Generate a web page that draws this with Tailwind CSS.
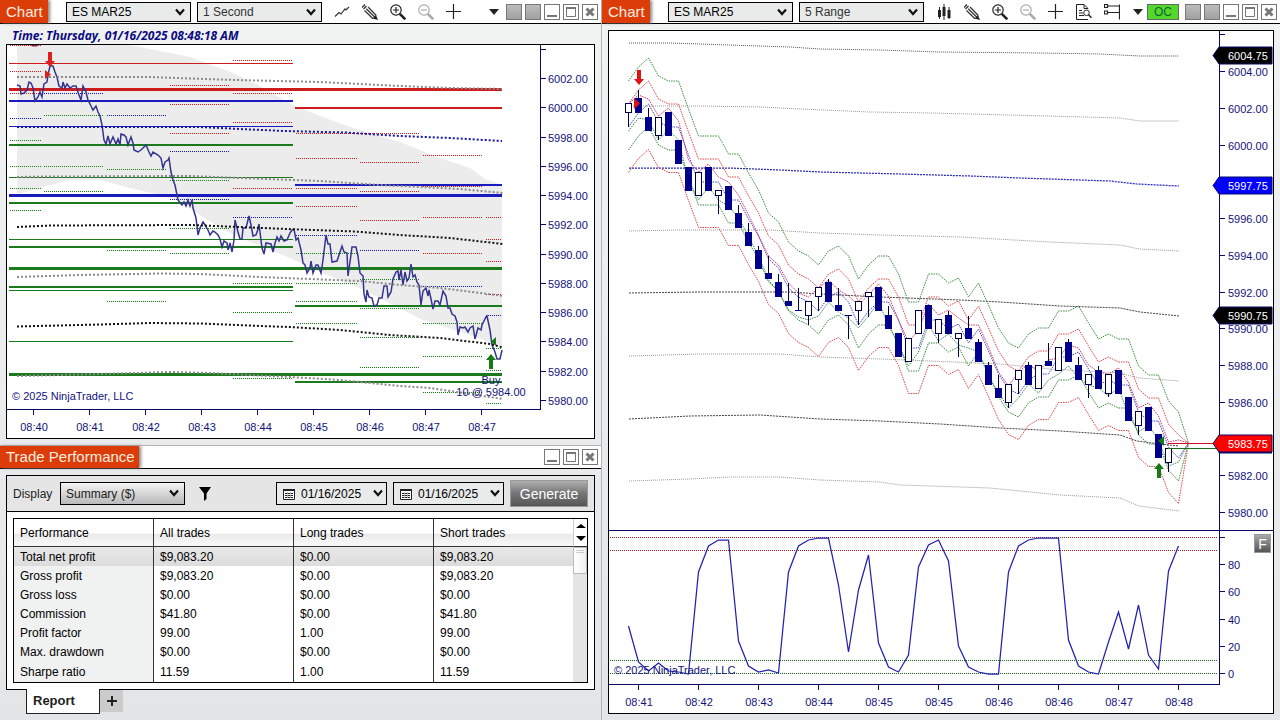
<!DOCTYPE html>
<html lang="en">
<head>
    <meta charset="UTF-8">
    <meta name="viewport" content="width=device-width, initial-scale=1.0">
    <title>ES MAR25 - Charts and Trade Performance</title>
    <script src="https://cdn.jsdelivr.net/npm/@tailwindcss/browser@4"></script>
</head>
<body class="min-h-screen bg-linear-to-b from-[#f1f3f3] to-[#e4e5e7] font-['Liberation_Sans',Arial,sans-serif] text-xs text-black">

    <!-- Shared icons -->
    <svg class="hidden">
        <symbol id="i-line" viewBox="0 0 16 16"><path d="M1 12.5l4-4 2 1.500 4-5 1 1 3-3" fill="none" stroke="#333" stroke-width="1.2"/></symbol>
        <symbol id="i-bars" viewBox="0 0 16 16"><path d="M3.5 3v12M8 0v16M13 3v12" stroke="#222"/><path d="M2 6h3v7H2zM6.5 3h3v9h-3zM11.500 6h3v8h-3z" fill="#222"/></symbol>
        <symbol id="i-pencil" viewBox="0 0 16 16"><path d="M0 3.500l3-3M1.500 5l3-3" stroke="#333" stroke-width="1.300"/><path d="M2.500 6.500L11 14.800M4.200 4.800L12.700 13M6 3L14.300 11.500" stroke="#333" stroke-width="1.200"/><path d="M10.500 14.500l3.500-3.500L16 16z" fill="#222"/></symbol>
        <symbol id="i-zoomin" viewBox="0 0 16 16"><circle cx="6" cy="6" r="5.200" fill="#fff" stroke="#222" stroke-width="1.200"/><path d="M3 6h6M6 3v6" stroke="#222" stroke-width="1.200"/><path d="M9.800 9.800l5.500 5.500" stroke="#222" stroke-width="2.600"/></symbol>
        <symbol id="i-zoomout" viewBox="0 0 16 16"><circle cx="6" cy="6" r="5.200" fill="#fff" stroke="#aaa" stroke-width="1.200"/><path d="M3 6h6" stroke="#aaa" stroke-width="1.200"/><path d="M9.800 9.800l5.500 5.500" stroke="#aaa" stroke-width="2.600"/></symbol>
        <symbol id="i-cross" viewBox="0 0 16 16"><path d="M0 7.500h15M7.500 0v15" stroke="#222" stroke-width="1.200"/></symbol>
        <symbol id="i-doc" viewBox="0 0 16 16"><path d="M12 15.500H.5V.5h7.500l4 4M8 .5v4h4M3 6.500h3M3 9h4M3 11.500h5" fill="none" stroke="#222"/><circle cx="10.500" cy="8.800" r="2.800" fill="#fff" stroke="#222"/><path d="M12.500 10.800l3 3" stroke="#222" stroke-width="1.500"/></symbol>
        <symbol id="i-tree" viewBox="0 0 16 16"><path d="M.5.500h3v3h-3zM.5 7h3v3h-3zM4 2h11M4 8.500h11M15.500.5v15" fill="none" stroke="#222" stroke-width="1.200"/></symbol>
        <symbol id="i-caret" viewBox="0 0 10 6"><path d="M0 0h10L5 6z" fill="#222"/></symbol>
        <symbol id="i-chev" viewBox="0 0 10 8"><path d="M1 1.500l4 4.500 4-4.500" fill="none" stroke="#111" stroke-width="2.200"/></symbol>
        <symbol id="i-min" viewBox="0 0 14 14"><path d="M2 11h10" stroke="#777" stroke-width="2"/></symbol>
        <symbol id="i-max" viewBox="0 0 14 14"><path d="M2.500 3.500h9v8h-9z" fill="none" stroke="#777"/><path d="M2 3h10" stroke="#777" stroke-width="2"/></symbol>
        <symbol id="i-close" viewBox="0 0 14 14"><path d="M3.500 3.500l7 7M10.500 3.500l-7 7" stroke="#777" stroke-width="3"/></symbol>
        <symbol id="i-cal" viewBox="0 0 12 12"><path d="M.5 1.500h11v10H.5z" fill="#fff" stroke="#222"/><path d="M0 1h12v2H0z" fill="#222"/><path d="M2 5.500h8M2 7.500h8M2 9.500h8" stroke="#222"/><path d="M4.500 4v6M7.500 4v6" stroke="#bbb" stroke-width=".8"/></symbol>
    </svg>

    <div class="grid min-h-screen grid-cols-[602fr_678fr]">

        <!-- Left column -->
        <div class="flex min-w-0 flex-col border-r border-[#b4b4b4]">
            <header class="flex h-6 items-center border-b border-black bg-white pr-[3px]">
                <h2 class="h-full w-12 shrink-0 bg-[#dc3d08] pl-1.5 text-[15px] leading-6 text-[#fdeee0] shadow-[2px_0_3px_#888]">Chart</h2>
                <label class="relative ml-[18px] flex">
                    <select aria-label="Instrument" class="h-5 w-[125px] appearance-none border border-black bg-[#e9eaea] pl-[5px]"><option>ES MAR25</option></select>
                    <svg class="pointer-events-none absolute top-1.5 right-1.5 h-2 w-2.5"><use href="#i-chev"/></svg>
                </label>
                <label class="relative ml-1.5 flex">
                    <select aria-label="Interval" class="h-5 w-[125px] appearance-none border border-black bg-[#e9eaea] pl-[5px] text-[#333]"><option>1 Second</option></select>
                    <svg class="pointer-events-none absolute top-1.5 right-1.5 h-2 w-2.5"><use href="#i-chev"/></svg>
                </label>
                <div class="ml-3 flex gap-3">
                    <button aria-label="Chart style"><svg class="size-4"><use href="#i-line"/></svg></button>
                    <button aria-label="Drawing tools"><svg class="size-4"><use href="#i-pencil"/></svg></button>
                    <button aria-label="Zoom in"><svg class="size-4"><use href="#i-zoomin"/></svg></button>
                    <button aria-label="Zoom out"><svg class="size-4"><use href="#i-zoomout"/></svg></button>
                    <button aria-label="Crosshair"><svg class="size-4"><use href="#i-cross"/></svg></button>
                </div>
                <button aria-label="More" class="ml-auto"><svg class="h-1.5 w-2.5"><use href="#i-caret"/></svg></button>
                <div class="ml-[7px] flex gap-[3px]">
                    <button aria-label="Instrument link" class="size-4 border border-[#777] bg-linear-to-b from-[#bdbdbd] to-[#a0a0a0]"></button>
                    <button aria-label="Interval link" class="size-4 border border-[#777] bg-linear-to-b from-[#bdbdbd] to-[#a0a0a0]"></button>
                    <button aria-label="Minimize" class="size-4 border border-[#777] bg-white"><svg class="size-3.5"><use href="#i-min"/></svg></button>
                    <button aria-label="Maximize" class="size-4 border border-[#777] bg-white"><svg class="size-3.5"><use href="#i-max"/></svg></button>
                    <button aria-label="Close" class="size-4 border border-[#777] bg-white"><svg class="size-3.5"><use href="#i-close"/></svg></button>
                </div>
            </header>

            <p class="h-5 pt-0.5 pl-3 font-['Open_Sans','Noto_Sans',sans-serif] text-xs leading-5 font-bold text-[#0a0a80] italic">Time: Thursday, 01/16/2025 08:48:18 AM</p>

            <div class="mx-1.5 border border-black bg-white">
                <svg id="secondChart" class="block h-auto w-full text-[11px]" viewBox="7 45 587 393"></svg>
            </div>

            <!-- Trade performance window -->
            <header class="mt-1.5 flex h-6 items-center border-t border-b border-t-[#b4b4b4] border-b-black bg-white pr-[3px]">
                <h2 class="h-full bg-[#dc3d08] pr-1 pl-1.5 text-[15px] leading-[22px] text-[#fdeee0] shadow-[2px_0_3px_#888]">Trade Performance</h2>
                <div class="ml-auto flex gap-[3px]">
                    <button aria-label="Minimize" class="size-4 border border-[#777] bg-white"><svg class="size-3.5"><use href="#i-min"/></svg></button>
                    <button aria-label="Maximize" class="size-4 border border-[#777] bg-white"><svg class="size-3.5"><use href="#i-max"/></svg></button>
                    <button aria-label="Close" class="size-4 border border-[#777] bg-white"><svg class="size-3.5"><use href="#i-close"/></svg></button>
                </div>
            </header>

            <section class="mx-1.5 mt-1.5 border border-black bg-white">
                <div class="flex h-9 items-center border-b border-black bg-[#e5e5e5] px-1.5">
                    <label for="display" class="w-[47px] text-[#222]">Display</label>
                    <div class="relative flex">
                        <select id="display" class="h-[23px] w-[125px] appearance-none border border-black bg-linear-to-b from-[#f4f4f4] to-[#b9b9b9] pl-[5px] text-[#222]"><option>Summary ($)</option></select>
                        <svg class="pointer-events-none absolute top-[7px] right-1.5 h-2 w-2.5"><use href="#i-chev"/></svg>
                    </div>
                    <button aria-label="Filter" class="ml-3.5"><svg class="h-3.5 w-3" viewBox="0 0 12 14"><path d="M0 0h12L7.500 6.500V12L5 14V6.500z"/></svg></button>
                    <div class="relative ml-auto flex">
                        <select aria-label="Start date" class="h-[23px] w-[111px] appearance-none border border-black bg-[#e9eaea] pl-6"><option>01/16/2025</option></select>
                        <svg class="pointer-events-none absolute top-1.5 left-[7px] size-3"><use href="#i-cal"/></svg>
                        <svg class="pointer-events-none absolute top-[7px] right-1 h-2 w-2.5"><use href="#i-chev"/></svg>
                    </div>
                    <div class="relative ml-1.5 flex">
                        <select aria-label="End date" class="h-[23px] w-[111px] appearance-none border border-black bg-[#e9eaea] pl-6"><option>01/16/2025</option></select>
                        <svg class="pointer-events-none absolute top-1.5 left-[7px] size-3"><use href="#i-cal"/></svg>
                        <svg class="pointer-events-none absolute top-[7px] right-1 h-2 w-2.5"><use href="#i-chev"/></svg>
                    </div>
                    <button class="ml-1.5 h-[27px] w-[78px] border border-[#999] bg-linear-to-b from-[#b0b0b0] via-[#757575] to-[#575757] text-sm leading-6 text-white">Generate</button>
                </div>

                <div class="m-1.5 flex border border-black">
                    <table class="flex-1 border-separate border-spacing-0 text-left">
                        <thead>
                            <tr class="h-7 bg-linear-to-b from-white from-50% via-[#eaeaea] via-55% to-[#fafafa]">
                                <th class="w-[140px] border-r border-b border-[#333] pl-1.5 font-normal">Performance</th>
                                <th class="w-[140px] border-r border-b border-[#333] pl-1.5 font-normal">All trades</th>
                                <th class="w-[140px] border-r border-b border-[#333] pl-1.5 font-normal">Long trades</th>
                                <th class="border-b border-[#333] pl-1.5 font-normal">Short trades</th>
                            </tr>
                        </thead>
                        <tbody id="performanceRows"></tbody>
                    </table>
                    <div class="flex w-3.5 flex-col bg-[#e4e4e4]">
                        <div class="flex h-7 flex-col items-center justify-between border-b border-l border-b-[#333] border-l-[#ccc] bg-white py-[5px]">
                            <svg class="h-1 w-2.5" viewBox="0 0 10 4"><path d="M0 4l5-4 5 4z"/></svg>
                            <svg class="h-[5px] w-2.5" viewBox="0 0 10 5"><path d="M0 0l5 5 5-5z"/></svg>
                        </div>
                        <div class="h-[27px] border border-[#bbb] bg-linear-to-r from-white to-[#f0f0f0] px-0.5 pt-0.5">
                            <div class="h-[3px] border-y border-[#ccc]"></div>
                        </div>
                    </div>
                </div>
            </section>

            <div class="flex pl-[26px]">
                <a href="#report" class="z-10 -mt-px h-[25px] w-[74px] border-x border-b border-[#222] bg-white pl-1.5 text-[13px] leading-6 font-bold text-[#222]">Report</a>
                <button aria-label="Add tab" class="flex h-[22px] w-[23px] items-center justify-center bg-[#cbcbcb]"><svg class="size-2.5" viewBox="0 0 10 10"><path d="M0 5h10M5 0v10" stroke="#222" stroke-width="2"/></svg></button>
            </div>
        </div>

        <!-- Right column -->
        <div class="min-w-0">
            <header class="flex h-6 items-center border-b border-black bg-white pr-[3px]">
                <h2 class="h-full w-12 shrink-0 bg-[#dc3d08] pl-1.5 text-[15px] leading-6 text-[#fdeee0] shadow-[2px_0_3px_#888]">Chart</h2>
                <label class="relative ml-[18px] flex">
                    <select aria-label="Instrument" class="h-5 w-[125px] appearance-none border border-black bg-[#e9eaea] pl-[5px]"><option>ES MAR25</option></select>
                    <svg class="pointer-events-none absolute top-1.5 right-1.5 h-2 w-2.5"><use href="#i-chev"/></svg>
                </label>
                <label class="relative ml-1.5 flex">
                    <select aria-label="Interval" class="h-5 w-[125px] appearance-none border border-black bg-[#e9eaea] pl-[5px] text-[#333]"><option>5 Range</option></select>
                    <svg class="pointer-events-none absolute top-1.5 right-1.5 h-2 w-2.5"><use href="#i-chev"/></svg>
                </label>
                <div class="ml-3 flex gap-3">
                    <button aria-label="Chart style"><svg class="size-4"><use href="#i-bars"/></svg></button>
                    <button aria-label="Drawing tools"><svg class="size-4"><use href="#i-pencil"/></svg></button>
                    <button aria-label="Zoom in"><svg class="size-4"><use href="#i-zoomin"/></svg></button>
                    <button aria-label="Zoom out"><svg class="size-4"><use href="#i-zoomout"/></svg></button>
                    <button aria-label="Crosshair"><svg class="size-4"><use href="#i-cross"/></svg></button>
                    <button aria-label="Data box"><svg class="size-4"><use href="#i-doc"/></svg></button>
                    <button aria-label="Chart trader"><svg class="size-4"><use href="#i-tree"/></svg></button>
                </div>
                <button aria-label="More" class="ml-auto"><svg class="h-1.5 w-2.5"><use href="#i-caret"/></svg></button>
                <button class="ml-1 h-4 w-8 border border-[#666] bg-[#54d82c] text-xs leading-[14px] text-[#163]">OC</button>
                <div class="ml-1.5 flex gap-[3px]">
                    <button aria-label="Instrument link" class="size-4 border border-[#777] bg-linear-to-b from-[#bdbdbd] to-[#a0a0a0]"></button>
                    <button aria-label="Interval link" class="size-4 border border-[#777] bg-linear-to-b from-[#bdbdbd] to-[#a0a0a0]"></button>
                    <button aria-label="Minimize" class="size-4 border border-[#777] bg-white"><svg class="size-3.5"><use href="#i-min"/></svg></button>
                    <button aria-label="Maximize" class="size-4 border border-[#777] bg-white"><svg class="size-3.5"><use href="#i-max"/></svg></button>
                    <button aria-label="Close" class="size-4 border border-[#777] bg-white"><svg class="size-3.5"><use href="#i-close"/></svg></button>
                </div>
            </header>
            <div class="relative mx-1.5 mt-1.5 border border-black bg-white">
                <svg id="rangeChart" class="block h-auto w-full text-[11px]" viewBox="609 31 664 682"></svg>
                <button class="absolute top-[503px] right-[2px] h-[19px] w-[17px] border border-[#999] bg-linear-to-b from-[#a8a8a8] to-[#555] text-sm leading-4 text-white">F</button>
            </div>
        </div>
    </div>

    <script>
        const NAVY = '#0a0a66', TEXT = '#12127a';
        const RED = '#cc1c1c', BLUE = '#1a1abf', GREEN = '#1b7a1b';

        function line(x1, y1, x2, y2, color, width = 1, dash = '') {
            return `<line x1="${x1}" y1="${y1}" x2="${x2}" y2="${y2}" stroke="${color}" stroke-width="${width}" stroke-dasharray="${dash}" shape-rendering="crispEdges"/>`;
        }
        function poly(points, color, width = 1, dash = '') {
            return `<polyline points="${points}" fill="none" stroke="${color}" stroke-width="${width}" stroke-dasharray="${dash}"/>`;
        }
        function label(x, y, text, color = TEXT, anchor = 'start') {
            return `<text x="${x}" y="${y}" fill="${color}" text-anchor="${anchor}">${text}</text>`;
        }

        // ---------- performance table ----------
        const rows = [
            ['Total net profit', '$9,083.20', '$0.00', '$9,083.20'],
            ['Gross profit', '$9,083.20', '$0.00', '$9,083.20'],
            ['Gross loss', '$0.00', '$0.00', '$0.00'],
            ['Commission', '$41.80', '$0.00', '$41.80'],
            ['Profit factor', '99.00', '1.00', '99.00'],
            ['Max. drawdown', '$0.00', '$0.00', '$0.00'],
            ['Sharpe ratio', '11.59', '1.00', '11.59']
        ];
        document.getElementById('performanceRows').innerHTML = rows.map((r, i) => `
            <tr class="${i === 0 ? 'h-[19px] bg-linear-to-b from-[#e9e9e9] to-[#dcdcdc]' : i === rows.length - 1 ? 'h-[21px]' : 'h-[19px]'}">
                <td class="${i === 0 ? 'border-r border-[#333] pl-1.5' : 'border-r border-[#333] bg-[#f0f2f2] pl-1.5'}">${r[0]}</td>
                <td class="border-r border-[#333] pl-1.5">${r[1]}</td>
                <td class="border-r border-[#333] pl-1.5">${r[2]}</td>
                <td class="pl-1.5">${r[3]}</td>
            </tr>`).join('');

        // ---------- 1 second chart ----------
        let s = '';
        s += '<polygon fill="#ececec" points="17,45 130,45 190,57 233,73 260,86 293,105 320,116 350,127 400,142 440,158 470,168 485,179 502,185 502,347 470,335 423,320 357,287 320,272 290,258 250,242 222,229 200,215 180,201 160,195 130,188 100,180 70,180 40,188 17,194"/>';

        // pivot levels: y, x1, x2, colour, width
        [
            [63.5, 9, 293, RED, 1], [89.5, 9, 502, RED, 3], [108, 295, 502, RED, 2],
            [101, 9, 293, BLUE, 2], [126.5, 9, 293, BLUE, 1], [195.5, 9, 502, BLUE, 3], [185, 295, 502, BLUE, 2],
            [145, 9, 293, GREEN, 2], [177.5, 9, 293, GREEN, 1], [203, 9, 293, GREEN, 2], [239.5, 9, 293, GREEN, 1],
            [247, 9, 293, GREEN, 2], [268.5, 9, 502, GREEN, 3], [287, 9, 293, GREEN, 2], [290.5, 9, 293, GREEN, 1],
            [306, 295, 502, GREEN, 2], [341.5, 9, 293, GREEN, 1], [374.5, 9, 502, GREEN, 3], [382, 295, 502, GREEN, 2]
        ].forEach(l => { s += line(l[1], l[0], l[2], l[0], l[3], l[4]); });

        // short dotted levels per time block
        [
            [10, 41, { r: [45.5, 71.5, 93.5], b: [118.5], g: [140.5, 166.5, 188.5, 210.5] }],
            [44, 103, { b: [93.5], g: [115.5, 166.5, 191.5] }],
            [107, 166, { b: [115.5], g: [169.5, 250.5, 301.5] }],
            [170, 229, { r: [85.5, 104.5, 133.5], b: [151.5, 199.5], g: [180.5, 228.5, 253.5] }],
            [233, 292, { r: [60.5, 93.5, 122.5, 188.5], b: [217.5], g: [283.5, 312.5, 378.5] }],
            [296, 357, { r: [133.5, 158.5, 188.5, 206.5], b: [235.5], g: [253.5, 283.5, 301.5, 323.5] }],
            [360, 419, { r: [133.5, 162.5, 191.5, 220.5], b: [250.5], g: [279.5, 308.5, 337.5, 367.5] }],
            [423, 482, { r: [155.5, 186.5, 217.5, 253.5], b: [286.5], g: [323.5, 356.5, 392.5] }],
            [486, 502, { r: [217.5, 239.5, 261.5, 294.5], b: [315.5], g: [348.5, 370.5, 403.5] }]
        ].forEach(([x1, x2, set]) => {
            (set.r || []).forEach(y => { s += line(x1, y, x2, y, '#d81818', 1, '1 1'); });
            (set.b || []).forEach(y => { s += line(x1, y, x2, y, '#1414c8', 1, '1 1'); });
            (set.g || []).forEach(y => { s += line(x1, y, x2, y, '#148014', 1, '1 1'); });
        });

        s += poly('17,85 20,86 21,94 24,93 27,90 29,82 31,83 33,88 35,101 38,97 40,92 42,97 44,84 47,82 48,75 50,66 53,66 55,72 57,77 59,86 62,88 63,82 65,88 67,84 70,88 73,86 76,86 79,95 81,100 83,86 86,92 88,100 91,106 93,110 96,106 98,112 100,116 102,125 104,140 106,144 108,136 110,144 113,137 116,144 118,139 120,145 121,134 124,135 126,137 128,145 131,137 133,143 134,150 138,152 141,150 144,147 146,145 149,152 151,156 153,152 158,155 161,158 163,168 165,162 168,160 169,158 171,172 173,180 175,185 178,200 182,205 184,202 186,206 188,200 190,206 192,200 193,208 196,218 198,235 200,228 203,222 205,225 208,230 210,235 213,231 215,232 218,235 220,239 222,247 224,241 227,243 228,250 230,243 232,252 234,240 235,220 238,232 240,239 242,239 243,228 246,228 249,216 251,225 253,236 256,235 258,229 259,224 262,248 264,254 266,243 271,244 273,252 275,243 277,237 279,241 281,236 284,241 287,240 290,233 292,230 294,229 296,240 298,238 301,250 303,263 305,265 307,273 310,268 311,261 313,273 316,265 318,265 321,273 323,260 326,235 328,244 330,244 332,262 337,261 339,255 342,246 344,252 347,253 348,276 350,262 352,247 356,247 358,256 360,273 363,276 364,294 366,302 367,290 369,297 372,298 374,306 377,305 379,298 382,298 384,286 387,286 388,297 391,292 393,279 396,272 398,271 399,280 401,270 403,285 405,272 407,281 409,278 411,264 413,277 415,275 417,282 419,285 421,305 423,291 426,288 428,296 429,290 431,299 433,309 435,301 438,301 440,305 443,291 446,296 448,308 450,308 452,314 455,316 457,322 458,335 460,327 463,328 465,327 468,332 470,328 473,326 475,339 478,328 481,330 482,325 486,317 487,316 490,330 492,345 495,352 497,359 500,359 502,350', '#34348f', 1.5);

        // averages and deviation bands
        s += poly('17,77 150,77 190,78.5 235,80 320,82 400,86 450,88 502,89', '#8a8a8a', 2, '2 2');
        s += poly('17,127 200,127 240,129 285,131 345,132.5 400,136 450,138 502,141', '#1414a8', 2, '2 2');
        s += poly('17,177 50,176.5 190,176 240,178 320,181 380,185 420,187 460,189 503,193', '#8a8a8a', 2, '2 2');
        s += poly('17,227 50,225.5 190,225 250,227.5 300,229.5 355,231.5 400,235 450,238 503,244', '#111', 2, '2 2');
        s += poly('17,277 80,275 160,273.5 200,274 260,277 310,279 360,281 400,285 440,288 503,296', '#8a8a8a', 2, '2 2');
        s += poly('17,326.5 100,324.5 150,323 200,323.5 260,326 290,327 340,330 390,335 440,338 490,344 503,347.5', '#111', 2, '2 2');
        s += poly('17,376 100,374 170,372 210,373 250,375 290,377 340,380 400,386 430,388 470,394 503,399', '#8a8a8a', 2, '2 2');

        // executions
        s += '<path d="M31 45h7l-1 1.500h-5z" fill="#8a2050"/>';
        s += '<path d="M48 52h4v9h3l-5 6-5-6h3zM45 70l6 4.500-6 4.500z" fill="#e01e1e"/>';
        s += '<path d="M491 354l5 6h-3v9h-4v-9h-3zM496 337v9l-5-4.500z" fill="#167a16"/>';
        s += label(491, 384, 'Buy', TEXT, 'middle') + label(491, 396, '10 @ 5984.00', TEXT, 'middle');
        s += label(12, 400, '© 2025 NinjaTrader, LLC');

        // axes
        s += line(540.5, 45, 540.5, 410, NAVY) + line(7, 409.5, 541, 409.5, NAVY) + line(541, 49.5, 546, 49.5, NAVY);
        for (let i = 0; i < 12; i++) {
            const y = Math.round(78 + i * 29.25) + 0.5;
            s += line(541, y, 546, y, NAVY) + label(548, y + 4, (6002 - i * 2) + '.00');
        }
        ['08:40', '08:41', '08:42', '08:43', '08:44', '08:45', '08:46', '08:47', '08:47'].forEach((t, i) => {
            const x = 33.5 + i * 56;
            s += line(x, 410, x, 415, NAVY) + label(x + 0.5, 431, t, TEXT, 'middle');
        });
        document.getElementById('secondChart').innerHTML = s;

        // ---------- 5 range chart ----------
        let r = '';
        const barX = i => 628.5 + i * 10;
        const series = (values, offset = 0) => values.map((v, i) => `${barX(i)},${v + offset}`).join(' ');

        r += poly('629,43 669,43 729,45 790,47 820,49 880,50 940,52 1040,53 1100,54 1140,56 1179,56', '#555', 1, '1 1');
        r += poly('629,106 700,106 760,107 800,109 870,112 930,113 1010,115 1120,118 1140,121 1179,121', '#999', 1, '1 1');
        r += poly('629,168 729,168 780,170 820,172 900,174 970,176 1020,178 1110,181 1137,184 1179,186', '#2a2ab8', 1.25, '2 1');
        r += poly('629,231 680,230 770,230 820,233 880,235 960,237 1050,242 1120,245 1139,249 1179,251', '#999', 1, '1 1');
        r += poly('629,293 700,292 790,292 820,294 880,297 960,300 1000,302 1060,306 1120,308 1140,312 1179,316', '#444', 1, '2 1');
        r += poly('629,356 700,354 780,354 820,357 880,359 930,361 1000,364 1050,369 1120,373 1139,378 1179,381', '#999', 1, '1 1');
        r += poly('629,419 690,416 760,415 820,419 880,421 940,424 1000,428 1060,431 1120,435 1137,441 1160,444 1179,446', '#444', 1, '2 1');
        r += poly('629,481 690,479 730,477 780,477 820,480 880,482 900,485 990,488 1060,495 1120,498 1139,506 1179,511', '#999', 1, '1 1');

        // envelope: centre line with two bands on either side
        const upper = [81, 67, 58, 76, 81, 81, 109, 136, 136, 136, 154, 154, 173, 190, 213, 222, 242, 251, 256, 265, 251, 246, 256, 279, 265, 256, 256, 274, 302, 302, 274, 274, 283, 278, 297, 283, 305, 328, 343, 348, 334, 328, 328, 311, 311, 306, 323, 339, 334, 339, 339, 366, 375, 375, 401, 412];
        [[0, '#3a8a3a'], [23, '#e04444'], [46, '#4444d0'], [69, '#3a8a3a'], [91.5, '#e04444']].forEach(([offset, color]) => {
            r += poly(series(upper, offset) + ' 1188.5,443', color, 1, '1.5 1');
        });
        const innerHigh = [104, 95, 99, 116, 108, 121, 160, 172, 164, 177, 182, 195, 215, 235, 256, 265, 283, 293, 297, 288, 280, 290, 296, 305, 295, 284, 296, 320, 342, 330, 304, 315, 310, 318, 325, 325, 347, 372, 386, 372, 364, 372, 360, 358, 345, 348, 365, 372, 374, 368, 382, 408, 403, 416, 442, 440, 443];
        const innerLow = [131, 118, 120, 140, 130, 140, 180, 200, 187, 200, 206, 218, 236, 256, 280, 292, 310, 317, 320, 316, 302, 312, 318, 328, 316, 302, 325, 345, 366, 352, 325, 341, 334, 345, 348, 352, 376, 393, 408, 398, 384, 393, 380, 374, 366, 378, 385, 388, 396, 388, 415, 432, 425, 440, 466, 462, 443];
        r += poly(series(innerHigh), '#d0306a', 1, '1.5 1') + poly(series(innerLow), '#3a8a5a', 1, '1.5 1');

        // bars: filled, body top, body bottom, high, low
        const bars = [
            [0, 103, 113, 103, 127], [1, 98, 113, 90, 113], [1, 117, 131, 108, 131], [0, 117, 136, 117, 140], [1, 112, 136, 112, 136],
            [1, 140, 164, 140, 164], [1, 167, 191, 167, 191], [0, 172, 196, 172, 196], [1, 167, 191, 167, 191], [0, 190, 196, 190, 214],
            [1, 186, 210, 186, 210], [1, 213, 228, 205, 228], [1, 232, 246, 223, 246], [1, 250, 269, 246, 269], [1, 273, 279, 256, 279],
            [1, 282, 297, 274, 297], [1, 301, 306, 283, 306], [1, 310, 311, 288, 311], [0, 301, 316, 301, 325], [0, 287, 297, 287, 311],
            [1, 282, 302, 279, 302], [1, 305, 311, 288, 311], [1, 315, 316, 315, 339], [0, 301, 311, 301, 325], [0, 292, 297, 292, 317],
            [1, 287, 311, 287, 311], [1, 315, 329, 306, 329], [1, 333, 357, 333, 357], [0, 338, 362, 338, 362], [0, 310, 334, 310, 334],
            [1, 305, 329, 305, 329], [0, 319, 334, 319, 343], [1, 315, 334, 311, 334], [0, 333, 339, 333, 357], [1, 328, 339, 316, 339],
            [1, 342, 362, 339, 362], [1, 365, 385, 362, 385], [1, 388, 398, 375, 398], [0, 384, 403, 384, 408], [0, 370, 380, 370, 394],
            [1, 365, 385, 362, 385], [0, 365, 389, 365, 389], [1, 361, 366, 343, 366], [0, 347, 371, 347, 371], [1, 342, 362, 339, 362],
            [1, 365, 380, 357, 380], [0, 374, 385, 374, 398], [1, 370, 389, 366, 389], [0, 374, 394, 374, 397], [1, 370, 394, 370, 394],
            [1, 397, 421, 397, 421], [0, 411, 426, 411, 435], [1, 407, 431, 407, 431], [1, 434, 458, 434, 458], [0, 448, 463, 448, 472]
        ];
        bars.forEach(([filled, top, bottom, high, low], i) => {
            const x = barX(i);
            r += line(x, high, x, top, '#00004a') + line(x, bottom, x, low, '#00004a');
            r += filled
                ? `<rect x="${x - 3.5}" y="${top}" width="7" height="${bottom - top}" fill="#00008b"/>`
                : `<rect x="${x - 3}" y="${top + 0.5}" width="6" height="${bottom - top - 1}" fill="#fff" stroke="#00004a"/>`;
        });

        r += '<path d="M637 70h4v9h3l-5 6-5-6h3zM634 98l6 5.500-6 5.500z" fill="#e01414"/>';
        r += '<path d="M1159 463l5 6h-3v9h-4v-9h-3zM1164 436v10l-6-5z" fill="#167a16"/>';

        // oscillator panel
        [[537.5, '#981c1c'], [550.5, '#981c1c'], [660.5, '#1b6a1b'], [673.5, '#1b6a1b']].forEach(([y, color]) => {
            r += line(610, y, 1218, y, color, 1, '1 1');
        });
        const oscillator = [626, 662, 671, 663, 671, 672, 674, 572, 546, 540, 540, 641, 666, 672, 670, 673, 572, 546, 540, 538, 538, 585, 652, 590, 555, 643, 667, 672, 655, 567, 545, 540, 561, 646, 667, 672, 674, 674, 572, 546, 540, 538, 538, 538, 640, 666, 672, 674, 642, 612, 649, 605, 655, 669, 571, 546];
        r += poly(series(oscillator), '#2222b0', 1.25);
        r += label(614, 674, '© 2025 NinjaTrader, LLC');

        // axes
        r += line(1219.5, 31, 1219.5, 685, NAVY) + line(609, 530.5, 1273, 530.5, NAVY) + line(609, 684.5, 1220, 684.5, NAVY);
        r += line(1220, 34.5, 1225, 34.5, NAVY) + line(1220, 537.5, 1225, 537.5, NAVY);
        for (let i = 0; i < 13; i++) {
            const price = 6004 - i * 2;
            if (price === 5998 || price === 5984) continue;
            const y = Math.round(71 + i * 36.75) + 0.5;
            r += line(1220, y, 1225, y, NAVY) + label(1228, y + 4, price + '.00');
        }
        [[564.5, 80], [591.5, 60], [619.5, 40], [646.5, 20], [673.5, 0]].forEach(([y, v]) => {
            r += line(1220, y, 1225, y, NAVY) + label(1228, y + 4, v);
        });
        ['08:41', '08:42', '08:43', '08:44', '08:45', '08:45', '08:46', '08:46', '08:47', '08:48'].forEach((t, i) => {
            const x = 638.5 + i * 60;
            r += line(x, 685, x, 690, NAVY) + label(x + 0.5, 706, t, TEXT, 'middle');
        });

        // price markers
        r += line(1168, 443.5, 1214, 443.5, '#d01020') + line(1168, 448.5, 1220, 448.5, '#187018');
        r += `<path d="M1216 447l3 6.500h53v-6z" fill="${NAVY}"/>`;
        [[55.5, '#000', '6004.75'], [185.5, '#0000ff', '5997.75'], [315.5, '#000', '5990.75'], [443.5, '#ff0000', '5983.75']].forEach(([y, color, text]) => {
            r += `<path d="M1213 ${y}l6-8.500h53v17h-53z" fill="${color}" stroke="${NAVY}"/>` + label(1228, y + 4, text, '#fff');
        });
        document.getElementById('rangeChart').innerHTML = r;
    </script>
</body>
</html>
